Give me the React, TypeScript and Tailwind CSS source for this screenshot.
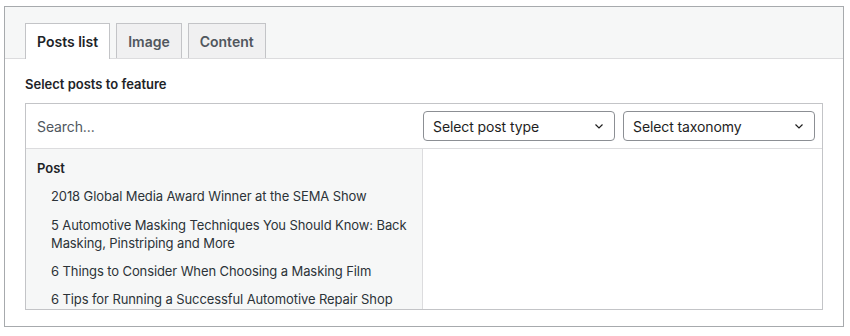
import React from "react";

const posts = [
	"2018 Global Media Award Winner at the SEMA Show",
	"5 Automotive Masking Techniques You Should Know: Back Masking, Pinstriping and More",
	"6 Things to Consider When Choosing a Masking Film",
	"6 Tips for Running a Successful Automotive Repair Shop",
];

const Chevron = () => (
	<svg width="12" height="12" viewBox="0 0 12 12" fill="none" className="shrink-0">
		<path d="M2.5 4.5 6 8l3.5-3.5" stroke="#1e1e1e" strokeWidth="1.2" />
	</svg>
);

const Select = ({ label }: { label: string }) => (
	<div className="w-[192px] h-[30px] flex items-center justify-between pl-[9px] pr-[9px] border border-[#8c8f94] rounded-[4px] bg-white text-[14px] tracking-[-0.1px] text-[#1e1e1e]">
		<span>{label}</span>
		<Chevron />
	</div>
);

const App = () => (
	<div className="w-[850px] h-[336px] bg-white pt-[6px] pl-[4px]" style={{ fontFamily: "Inter, 'Noto Sans', sans-serif" }}>
		<div className="w-[840px] h-[321px] border border-[#a7aaad] flex flex-col">
			<div className="h-[52px] shrink-0 bg-[#f6f7f7] border-b border-[#dcdcde] flex items-end gap-[6px] px-[20px]">
				<div className="h-[36px] -mb-px px-[11px] flex items-center bg-white border border-b-0 border-[#c3c4c7] text-[14px] font-semibold text-[#1d2327]">
					Posts list
				</div>
				<div className="h-[35px] px-[11px] flex items-center bg-[#f0f0f1] border border-b-0 border-[#c3c4c7] text-[14px] font-semibold text-[#50575e]">
					Image
				</div>
				<div className="h-[35px] px-[11px] flex items-center bg-[#f0f0f1] border border-b-0 border-[#c3c4c7] text-[14px] font-semibold text-[#50575e]">
					Content
				</div>
			</div>
			<div className="flex-1 min-h-0 px-5 pt-[15px] pb-4 flex flex-col">
				<div className="shrink-0 text-[13px] leading-5 font-semibold text-[#1d2327] mb-[9px]">Select posts to feature</div>
				<div className="flex-1 border border-[#c3c4c7] flex flex-col min-h-0">
					<div className="h-[45px] shrink-0 border-b border-[#dcdcde] flex items-center pl-[11px] pr-[7px] gap-[8px]">
						<span className="flex-1 text-[14px] tracking-[-0.1px] text-[#50575e]">Search...</span>
						<Select label="Select post type" />
						<Select label="Select taxonomy" />
					</div>
					<div className="flex-1 flex min-h-0">
						<div className="w-[397px] bg-[#f6f7f7] border-r border-[#dcdcde] overflow-hidden pt-[9px]">
							<div className="px-[11px] text-[13px] leading-5 font-semibold text-[#1d2327] mb-[4px]">Post</div>
							{posts.map((p, i) => (
								<div key={p} className={`pl-[25px] pr-[10px] py-[5px] text-[13px] leading-[18px] tracking-[-0.1px] text-[#2c3338] ${i === 0 ? "mb-px" : ""}`}>
									{p}
								</div>
							))}
						</div>
						<div className="flex-1" />
					</div>
				</div>
			</div>
		</div>
	</div>
);

export default App;
